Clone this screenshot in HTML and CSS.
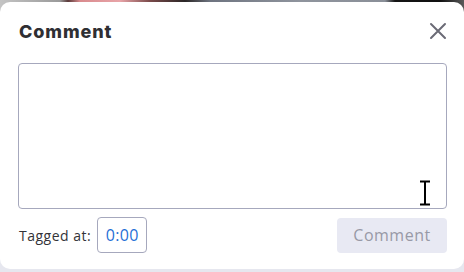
FILE: index.html
```html
<!DOCTYPE html>
<html>
<head>
<meta charset="utf-8">
<link rel="stylesheet" href="styles.css">
</head>
<body>
<div class="backdrop"></div>
<div class="dialog">
  <div class="header">
    <h2 class="title">Comment</h2>
    <button class="close" aria-label="Close">
      <svg width="18" height="18" viewBox="0 0 18 18"><path d="M2 2 L16 16 M16 2 L2 16" stroke="#6b6b76" stroke-width="2" stroke-linecap="round"/></svg>
    </button>
  </div>
  <div class="field">
    <textarea class="input"></textarea>
    <svg class="cursor" width="14" height="26" viewBox="0 0 14 26"><path d="M2 1.5 H12 M7 1.5 V24.5 M2 24.5 H12" stroke="#000" stroke-width="2" fill="none"/></svg>
  </div>
  <div class="footer">
    <div class="tag">
      <span class="tag-label">Tagged at:</span>
      <span class="time">0:00</span>
    </div>
    <button class="submit" disabled>Comment</button>
  </div>
</div>
</body>
</html>
```

FILE: styles.css
```css
html, body {
  margin: 0;
  padding: 0;
}
body {
  width: 464px;
  height: 272px;
  background: #e6e7ef;
  font-family: "Open Sans", "Liberation Sans", sans-serif;
  position: relative;
  overflow: hidden;
}
.backdrop {
  height: 14px;
  background: linear-gradient(90deg, #c4c4c4 0px, #9a9a9a 60px, #5a3a3a 68px, #d98b8e 80px, #e8a4a8 120px, #7a4a4a 150px, #2a2626 185px, #6e7480 210px, #8f949d 300px, #8a8f98 385px, #151515 395px, #101010 440px, #5a5a5a 464px);
}
.dialog {
  position: absolute;
  top: 2px;
  left: 0;
  width: 464px;
  height: 267px;
  box-sizing: border-box;
  background: #fff;
  border-radius: 10px;
  padding: 14px 17px 0 18px;
  display: flex;
  flex-direction: column;
}
.header {
  display: flex;
  align-items: center;
  justify-content: space-between;
  height: 30px;
}
.title {
  margin: 0 0 0 1px;
  font-family: "Inter", sans-serif;
  font-weight: 800;
  font-size: 18px;
  color: #2f2f33;
  letter-spacing: 0.9px;
}
.close {
  border: 0;
  background: none;
  padding: 0;
  width: 18px;
  height: 18px;
  margin-right: 0;
  display: flex;
}
.field {
  position: relative;
  margin-top: 17px;
}
.input {
  display: block;
  width: 429px;
  height: 146px;
  box-sizing: border-box;
  border: 1px solid #a6a8bd;
  border-radius: 4px;
  resize: none;
  outline: none;
  margin: 0;
}
.cursor {
  position: absolute;
  left: 400px;
  top: 117px;
}
.footer {
  display: flex;
  align-items: center;
  justify-content: space-between;
  margin-top: 8px;
}
.tag {
  display: flex;
  align-items: center;
  gap: 6px;
}
.tag-label {
  font-family: "Open Sans", sans-serif;
  font-size: 14px;
  letter-spacing: 0.5px;
  color: #333338;
  margin-left: 1px;
}
.time {
  width: 50px;
  height: 36px;
  box-sizing: border-box;
  border: 1px solid #a6a8bd;
  border-radius: 4px;
  display: flex;
  align-items: center;
  justify-content: center;
  color: #1f6fd6;
  font-size: 16px;
  letter-spacing: 0.3px;
  font-family: "Open Sans", sans-serif;
}
.submit {
  width: 110px;
  height: 35px;
  border: 0;
  border-radius: 4px;
  background: #e8e9f3;
  color: #9899a6;
  font-family: "Open Sans", sans-serif;
  font-size: 16px;
  letter-spacing: 0.5px;
  padding: 0;
}
```
